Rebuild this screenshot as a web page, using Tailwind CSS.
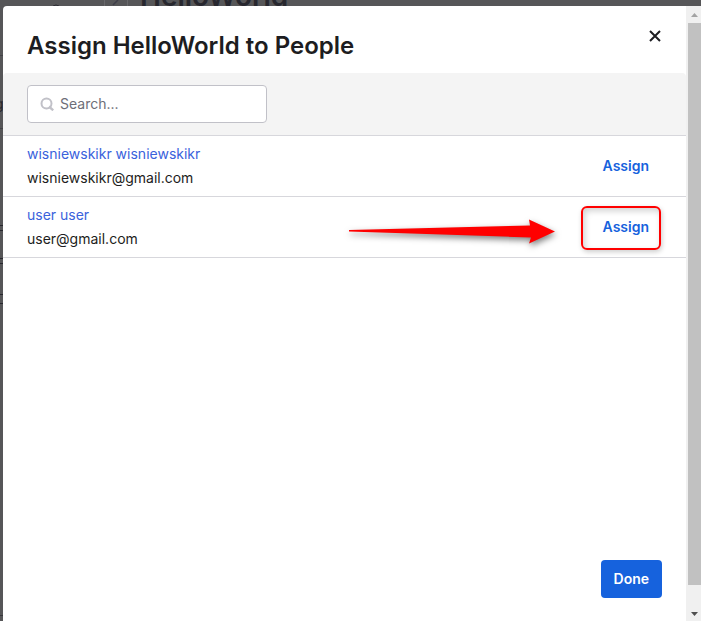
<!DOCTYPE html>
<html lang="en">
<head>
<meta charset="utf-8">
<title>Assign HelloWorld to People</title>
<script src="https://cdn.jsdelivr.net/npm/@tailwindcss/browser@4"></script>
</head>
<body class="relative h-screen overflow-hidden bg-[#565658] pl-[3px] pt-1.5 font-['Inter','Noto_Sans',sans-serif] text-sm text-[#1d1d21]">
  <!-- Dimmed page behind the dialog -->
  <div class="absolute inset-x-0 top-0 h-1.5 overflow-hidden" aria-hidden="true">
    <div class="absolute left-[104px] -top-5 h-10 w-6 border-x border-[#68686b]"></div>
    <svg class="absolute left-[110px] top-0" width="12" height="6" viewBox="0 0 12 6"><path d="M3 5 8 0" stroke="#3f3f49" stroke-width="1.5"/></svg>
    <svg class="absolute left-[52px] top-0" width="8" height="6" viewBox="0 0 8 6"><path d="M1 6 4 5 7 6" stroke="#2c2c33" fill="none"/></svg>
    <p class="absolute left-[140px] -top-5 text-[28px] leading-8 font-semibold text-[#27272e]">HelloWorld</p>
  </div>
  <div class="absolute bottom-0 left-0 top-1.5 w-[3px] overflow-hidden" aria-hidden="true">
    <div class="absolute top-[49px] h-px w-full bg-[#434347]"></div>
    <p class="absolute -left-[5px] top-[88px] text-[#27272e]">g</p>
    <div class="absolute top-[122px] h-px w-full bg-[#434347]"></div>
    <div class="absolute top-[219px] h-[6px] w-full border-y border-[#27272e]"></div>
    <div class="absolute top-[252px] h-[6px] w-full border-y border-[#27272e]"></div>
    <div class="absolute top-[288px] h-[10px] w-full border-y border-[#27272e]"></div>
    <div class="absolute top-[609px] h-px w-full bg-[#38383c]"></div>
  </div>

  <div role="dialog" aria-labelledby="title" class="relative flex h-full overflow-hidden rounded-tl bg-white">
    <div class="flex min-w-0 flex-1 flex-col">
      <header class="flex h-[67px] shrink-0 items-start justify-between pl-6 pr-6 pt-6">
        <h1 id="title" class="text-2xl leading-8 font-semibold">Assign HelloWorld to People</h1>
        <button type="button" aria-label="Close">
          <svg width="14" height="12" viewBox="0 0 14 12" fill="none" stroke="#1d1d21" stroke-width="2"><path d="m2 1 10 10M12 1 2 11"/></svg>
        </button>
      </header>
      <div class="flex shrink-0 rounded-t border-b border-[#d7d7dc] bg-[#f4f4f4] px-6 py-3">
        <label class="flex h-[38px] w-60 items-center gap-1.5 rounded border border-[#c1c1c8] bg-white px-3">
          <svg width="14" height="14" viewBox="0 0 14 14" fill="none" stroke="#c1c1c8" stroke-width="2"><circle cx="6.5" cy="6.5" r="5"/><path d="m9 9.5 4.2 3.8" stroke-width="2.4"/></svg>
          <input type="text" aria-label="Search" placeholder="Search..." class="min-w-0 flex-1 outline-none placeholder:text-[#6e6e78]">
        </label>
      </div>
      <ul>
        <li class="flex items-center justify-between border-b border-[#d7d7dc] py-1.5 pl-6 pr-[37px] leading-6">
          <div><a href="#" class="block text-[#3a62dc]">wisniewskikr wisniewskikr</a><p>wisniewskikr@gmail.com</p></div>
          <button type="button" class="font-semibold text-[#1662dd]">Assign</button>
        </li>
        <li class="flex items-center justify-between border-b border-[#d7d7dc] py-1.5 pl-6 pr-[37px] leading-6">
          <div><a href="#" class="block text-[#3a62dc]">user user</a><p>user@gmail.com</p></div>
          <button type="button" class="font-semibold text-[#1662dd]">Assign</button>
        </li>
      </ul>
      <footer class="mt-auto flex justify-end px-6 pb-[23px]">
        <button type="button" class="h-[38px] rounded bg-[#1662dd] px-[13px] font-semibold text-white">Done</button>
      </footer>
    </div>
    <!-- Scrollbar -->
    <div class="flex w-[15px] shrink-0 flex-col bg-[#f0f0f0] pl-0.5" aria-hidden="true">
      <svg class="h-[17px] w-full shrink-0" viewBox="0 0 13 17"><path d="M3 11 6.5 7 10 11Z" fill="#a3a3a3"/></svg>
      <div class="mb-[19px] flex-1 bg-[#c1c1c1]"></div>
      <svg class="h-[17px] w-full shrink-0" viewBox="0 0 13 17"><path d="M3 8 6.5 12 10 8Z" fill="#505050"/></svg>
    </div>
  </div>

  <!-- Annotations -->
  <svg class="pointer-events-none absolute right-[145px] top-[210px] drop-shadow-[1px_3px_3px_rgba(0,0,0,0.5)]" width="208" height="42" viewBox="0 0 208 42"><path d="M1 20 182 15.5 181 9.5 207 21.5 181 33.5 183 27.5 1 21.5Z" fill="#f00"/></svg>
  <div class="pointer-events-none absolute right-10 top-[206px] h-11 w-20 rounded-md border-2 border-[#f00] shadow-[1px_2px_5px_rgba(0,0,0,0.2),inset_2px_3px_6px_rgba(0,0,0,0.18)]"></div>
</body>
</html>
